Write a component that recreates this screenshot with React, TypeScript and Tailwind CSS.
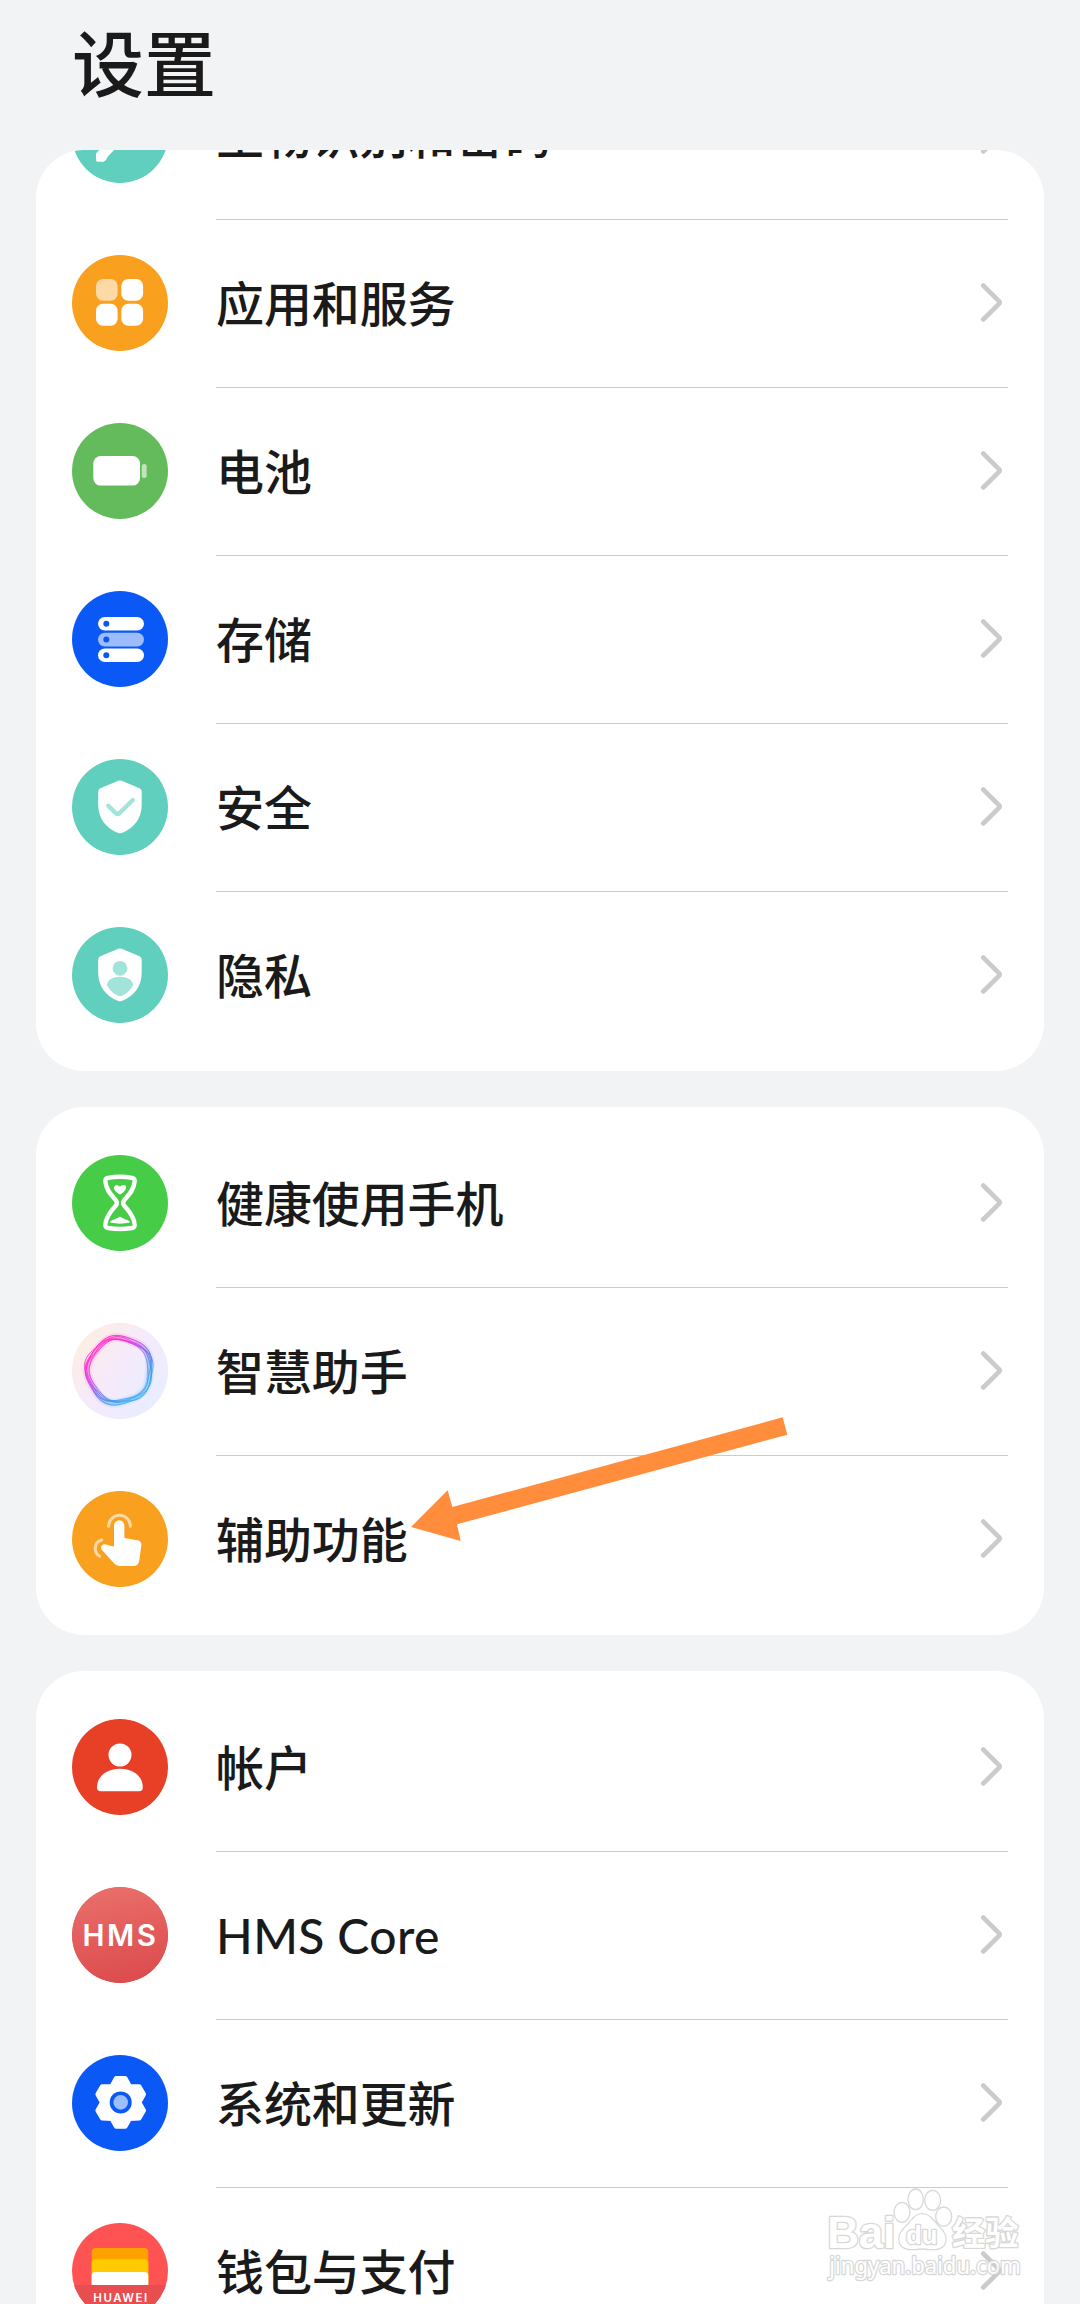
import React from "react";

type Item = {
  label: string;
  icon: React.ReactNode;
  color: string;
  latin?: boolean;
};

const shield =
  "M46.2 21.8Q48 21 49.8 21.8L67.5 29.2Q69.7 30.2 69.7 32.5V46C69.7 59 62 69.5 49.8 74Q48 74.6 46.2 74C34 69.5 26.2 59 26.2 46V32.5Q26.2 30.2 28.4 29.2Z";

const Svg = ({ children }: { children: React.ReactNode }) => (
  <svg className="size-24" viewBox="0 0 96 96" fill="none">
    {children}
  </svg>
);

const KeyIcon = () => (
  <Svg>
    <path
      d="M24 66.5L27 63.8H34L37.8 67.5L35.5 70L34 73L31.5 74.7H25.7Q24 74.7 24 73Z"
      fill="#fff"
    />
    <path d="M24 66.5L40 50L46 56L41.5 63.6L37.8 67.5Z" fill="#fff" />
    <circle cx="56" cy="40" r="16" fill="#fff" />
  </Svg>
);

const AppsIcon = () => (
  <Svg>
    <rect x="24" y="24" width="21.6" height="21.8" rx="7" fill="#fff" opacity="0.6" />
    <rect x="49.3" y="24" width="21.8" height="21.8" rx="7" fill="#fff" />
    <rect x="24" y="48.8" width="21.6" height="21.9" rx="7" fill="#fff" />
    <rect x="49.3" y="48.8" width="21.8" height="21.9" rx="7" fill="#fff" />
  </Svg>
);

const BatteryIcon = () => (
  <Svg>
    <rect x="21.3" y="33" width="46.7" height="29.6" rx="7.5" fill="#fff" />
    <rect x="69.7" y="41" width="5" height="14" rx="2.5" fill="#fff" opacity="0.6" />
  </Svg>
);

const StorageIcon = () => (
  <Svg>
    {[26, 41.8, 57.4].map((y, i) => (
      <g key={y}>
        <rect
          x="26"
          y={y}
          width="46"
          height="13.6"
          rx="6.8"
          fill="#fff"
          opacity={i === 1 ? 0.6 : 1}
        />
        <circle cx="34.3" cy={y + 6.8} r="3" fill="#0a59f7" />
      </g>
    ))}
  </Svg>
);

const SecurityIcon = () => (
  <Svg>
    <path d={shield} fill="#fff" />
    <path
      d="M36.3 46.8L43.6 54Q45.6 55.8 47.6 54L60.8 41"
      stroke="#a3e4da"
      strokeWidth="4.4"
      strokeLinecap="round"
    />
  </Svg>
);

const PrivacyIcon = () => (
  <Svg>
    <path d={shield} fill="#fff" />
    <circle cx="48" cy="41.3" r="7.4" fill="#a3e4da" />
    <path
      d="M34.8 57.5C36 52.5 41.5 49.8 48 49.8S60 52.5 61.2 57.5C59.5 62 55 66.5 50 68.8Q48 69.6 46 68.8C41 66.5 36.5 62 34.8 57.5Z"
      fill="#a3e4da"
    />
  </Svg>
);

const HourglassIcon = () => (
  <Svg>
    <path
      d="M36 22.8Q48 20.8 60 22.8Q63.2 23.4 62.6 27C61.5 36 56.5 40 52.2 45.2Q50.2 47.9 52.2 50.6C56.5 56 61.5 60 62.6 69Q63.2 72.5 60 73Q48 75 36 73Q32.8 72.5 33.4 69C34.5 60 39.5 56 43.8 50.6Q45.8 47.9 43.8 45.2C39.5 40 34.5 36 33.4 27Q32.8 23.4 36 22.8Z"
      stroke="#fff"
      strokeWidth="4.4"
      strokeLinejoin="round"
    />
    <path
      d="M48 39.6C44.5 37.6 41.2 34.5 42 32C43 29.6 46.5 29.8 48 31.8C49.5 29.8 53 29.2 54 31.2C54.8 34.2 51.5 37.6 48 39.6Z"
      fill="#fff"
    />
    <path d="M38 67.5C38.5 64.5 44 64.8 47 62Q48 61.3 49 62C52 64.8 57.5 64.5 58 67.5Q48 69.8 38 67.5Z" fill="#fff" />
  </Svg>
);

// wavy closed line round the middle of the assistant icon
const wave = (radius: number, depth: number, phase: number) => {
  const points: string[] = [];
  for (let a = 0; a < 360; a += 4) {
    const t = (a * Math.PI) / 180;
    const r = radius + depth * Math.cos(5 * t + phase) + 0.9 * Math.cos(2 * t + phase * 3);
    points.push(
      `${(47.3 + r * Math.cos(t)).toFixed(2)} ${(47.3 + r * Math.sin(t)).toFixed(2)}`
    );
  }
  return `M${points.join("L")}Z`;
};

const waves = [
  wave(33.8, 1.1, 2.9),
  wave(33, 1.4, 1.9),
  wave(32, 1.1, 3.9),
  wave(31, 1.3, 2.4),
  wave(30, 0.8, 3.4),
];

const AssistantIcon = () => (
  <Svg>
    <defs>
      <linearGradient id="assistantBg" x1="0.1" y1="0.15" x2="0.9" y2="0.85">
        <stop offset="0" stopColor="#fdeee2" />
        <stop offset="0.45" stopColor="#f6eafb" />
        <stop offset="1" stopColor="#e8eefe" />
      </linearGradient>
      <linearGradient id="assistantRing" x1="0.15" y1="0.2" x2="0.75" y2="0.9">
        <stop offset="0" stopColor="#ff1fc0" />
        <stop offset="0.3" stopColor="#e02fe6" />
        <stop offset="0.52" stopColor="#7a55e4" />
        <stop offset="0.78" stopColor="#2f8fec" />
        <stop offset="1" stopColor="#35a6f2" />
      </linearGradient>
    </defs>
    <circle cx="48" cy="48" r="48" fill="url(#assistantBg)" />
    <path d={wave(31.8, 1, 2.9)} stroke="url(#assistantRing)" strokeWidth="9" opacity="0.1" />
    <path d={wave(31.8, 1, 2.9)} stroke="url(#assistantRing)" strokeWidth="5" opacity="0.35" />
    {waves.map((d) => (
      <path key={d} d={d} stroke="url(#assistantRing)" strokeWidth="0.9" opacity="0.85" />
    ))}
  </Svg>
);

const TouchIcon = () => (
  <Svg>
    <path
      d="M42 34.4A5.2 5.2 0 0 1 52.4 34.4V47L65.5 49.3Q69.8 50.3 69.3 54.6L67.2 70Q66.4 75 61.5 75H47.5Q44.4 75 42.2 72.6L29.8 58.8Q28.2 56.4 29.8 54.4C32 52.4 35.5 53.6 38 54.8L42 55.6Z"
      fill="#fff"
    />
    <path
      d="M36.6 35.2A10.9 10.9 0 1 1 58.4 35.2M29.7 49C21.6 51.5 21.4 61.5 27.7 65.3"
      stroke="#fff"
      strokeWidth="3"
      strokeLinecap="round"
      opacity="0.6"
    />
  </Svg>
);

const AccountIcon = () => (
  <Svg>
    <circle cx="48" cy="36" r="11.5" fill="#fff" />
    <path
      d="M25 68.5C25 57 35 49.8 48 49.8S70.8 57 70.8 68.5Q70.8 72.3 67 72.3H28.8Q25 72.3 25 68.5Z"
      fill="#fff"
    />
  </Svg>
);

const HmsIcon = () => (
  <Svg>
    <defs>
      <linearGradient id="hmsBg" x1="0.4" y1="0" x2="0.6" y2="1">
        <stop offset="0" stopColor="#e96e69" />
        <stop offset="1" stopColor="#dc4b4d" />
      </linearGradient>
    </defs>
    <circle cx="48" cy="48" r="48" fill="url(#hmsBg)" />
    <text
      x="10.5"
      y="59.3"
      textLength="73.5"
      className="fill-white font-['Inter',sans-serif] text-[29.5px] font-semibold"
    >
      HMS
    </text>
  </Svg>
);

const GearIcon = () => (
  <Svg>
    <g transform="translate(48.7 47.4)">
      <path
        d="M-4.4 -23.8H4.4L8.8 -16L18.4 -15.7L22.8 -8.1L18.2 0L22.8 8.1L18.4 15.7L8.8 16L4.4 23.8H-4.4L-8.8 16L-18.4 15.7L-22.8 8.1L-18.2 0L-22.8 -8.1L-18.4 -15.7L-8.8 -16Z"
        fill="#fff"
        stroke="#fff"
        strokeWidth="5"
        strokeLinejoin="round"
      />
      <circle r="11" fill="#0a59f7" />
      <circle r="7.3" fill="#9dbdfc" />
    </g>
  </Svg>
);

const WalletIcon = () => (
  <Svg>
    <rect x="19.7" y="25" width="56.6" height="37" rx="4" fill="#ffa200" />
    <path d="M19.7 40.3Q19.7 36.3 23.7 36.3H72.3Q76.3 36.3 76.3 40.3V62H19.7Z" fill="#ffcb00" />
    <path d="M19.7 53Q19.7 49 23.7 49H72.3Q76.3 49 76.3 53V62H19.7Z" fill="#fff" />
    <path d="M0 62H96V96H0Z" fill="#e84d4f" />
    <text
      x="21.3"
      y="79"
      textLength="54"
      className="fill-white font-['Inter',sans-serif] text-[11.5px] font-semibold"
    >
      HUAWEI
    </text>
  </Svg>
);

const groups: Item[][] = [
  [
    { label: "生物识别和密码", icon: <KeyIcon />, color: "bg-[#61cfbe]" },
    { label: "应用和服务", icon: <AppsIcon />, color: "bg-[#f9a01e]" },
    { label: "电池", icon: <BatteryIcon />, color: "bg-[#64bb5c]" },
    { label: "存储", icon: <StorageIcon />, color: "bg-[#0a59f7]" },
    { label: "安全", icon: <SecurityIcon />, color: "bg-[#61cfbe]" },
    { label: "隐私", icon: <PrivacyIcon />, color: "bg-[#61cfbe]" },
  ],
  [
    { label: "健康使用手机", icon: <HourglassIcon />, color: "bg-[#47cc47]" },
    { label: "智慧助手", icon: <AssistantIcon />, color: "bg-[#f5e8fb]" },
    { label: "辅助功能", icon: <TouchIcon />, color: "bg-[#f9a01e]" },
  ],
  [
    { label: "帐户", icon: <AccountIcon />, color: "bg-[#e84026]" },
    { label: "HMS Core", icon: <HmsIcon />, color: "bg-[#e05a58]", latin: true },
    { label: "系统和更新", icon: <GearIcon />, color: "bg-[#0a59f7]" },
    { label: "钱包与支付", icon: <WalletIcon />, color: "bg-[#ff5252]" },
  ],
];

const Row = ({ item, first }: { item: Item; first: boolean }) => (
  <div className="flex h-[168px] shrink-0 items-start gap-12 px-9">
    <div className={`mt-9 size-24 shrink-0 overflow-hidden rounded-full ${item.color}`}>
      {item.icon}
    </div>
    <div
      className={`flex h-full grow items-center justify-between border-t pr-1 ${
        first ? "border-transparent" : "border-[#cacbcc]"
      }`}
    >
      <span
        className={`pt-px text-[48px] leading-none font-medium whitespace-nowrap ${
          item.latin ? "tracking-[0.4px]" : "tracking-[-0.1px]"
        }`}
      >
        {item.label}
      </span>
      <svg
        className="mb-px h-10 w-6"
        viewBox="0 0 24 40"
        fill="none"
        stroke="#cbcbcb"
        strokeWidth="4.6"
        strokeLinecap="round"
        strokeLinejoin="round"
      >
        <path d="M3.2 2.5L19.2 18.4Q20.3 19.5 19.2 20.6L3.2 36.5" />
      </svg>
    </div>
  </div>
);

const Arrow = () => (
  <svg className="absolute top-[1400px] left-[400px] h-40 w-[400px]" viewBox="0 0 1200 480">
    <path d="M33 381L143 271L157 321L1148 52L1162 104L171 373L182 423Z" fill="#ff8d3c" />
  </svg>
);

const Watermark = () => (
  <svg
    className="absolute right-0 bottom-0 h-[154px] w-[300px] opacity-85"
    viewBox="0 0 900 462"
    fill="#fff"
    stroke="#d2d2d2"
    strokeWidth="8"
    strokeLinejoin="round"
    paintOrder="stroke"
  >
    <text
      x="142"
      y="295"
      textLength="204"
      className="font-['Liberation_Sans',sans-serif] text-[132px] font-bold"
    >
      Bai
    </text>
    <ellipse cx="366" cy="187" rx="22" ry="28" />
    <ellipse cx="407" cy="148" rx="21" ry="29" />
    <ellipse cx="458" cy="151" rx="22" ry="28" />
    <ellipse cx="491" cy="200" rx="22" ry="27" />
    <path d="M427 193C449 193 459 213 473 227C491 244 502 260 494 280C486 301 458 298 427 295C396 298 369 301 361 280C353 260 363 244 381 227C395 213 405 193 427 193Z" />
    <text
      x="378"
      y="281"
      textLength="94"
      lengthAdjust="spacingAndGlyphs"
      className="font-['Liberation_Sans',sans-serif] text-[78px] font-bold"
    >
      du
    </text>
    <text
      x="516"
      y="286"
      textLength="200"
      className="font-['Noto_Sans_CJK_SC',sans-serif] text-[100px] font-bold"
    >
      经验
    </text>
    <text
      x="148"
      y="373"
      textLength="574"
      lengthAdjust="spacingAndGlyphs"
      className="font-['Noto_Sans',sans-serif] text-[68px]"
    >
      jingyan.baidu.com
    </text>
  </svg>
);

const App = () => {
  return (
    <div className="relative flex h-[2304px] w-[1080px] flex-col overflow-hidden bg-[#f1f3f5] font-['Lato','Noto_Sans_CJK_SC',sans-serif] text-[#1a1a1a]">
      <header className="flex h-[150px] shrink-0 items-start px-[72px] pt-[27px]">
        <h1 className="text-[72px] leading-none font-medium">设置</h1>
      </header>
      <main className="flex flex-col gap-9 px-9">
        {groups.map((items, i) => (
          <section
            key={items[0].label}
            className="flex shrink-0 flex-col overflow-hidden rounded-[48px] bg-white pb-3"
          >
            {/* the list is scrolled, so the first group starts above its card */}
            <div className={i === 0 ? "-mt-[99px]" : "pt-3"}>
              {items.map((item, j) => (
                <Row key={item.label} item={item} first={j === 0} />
              ))}
            </div>
          </section>
        ))}
      </main>
      <Arrow />
      <Watermark />
    </div>
  );
};

export default App;
